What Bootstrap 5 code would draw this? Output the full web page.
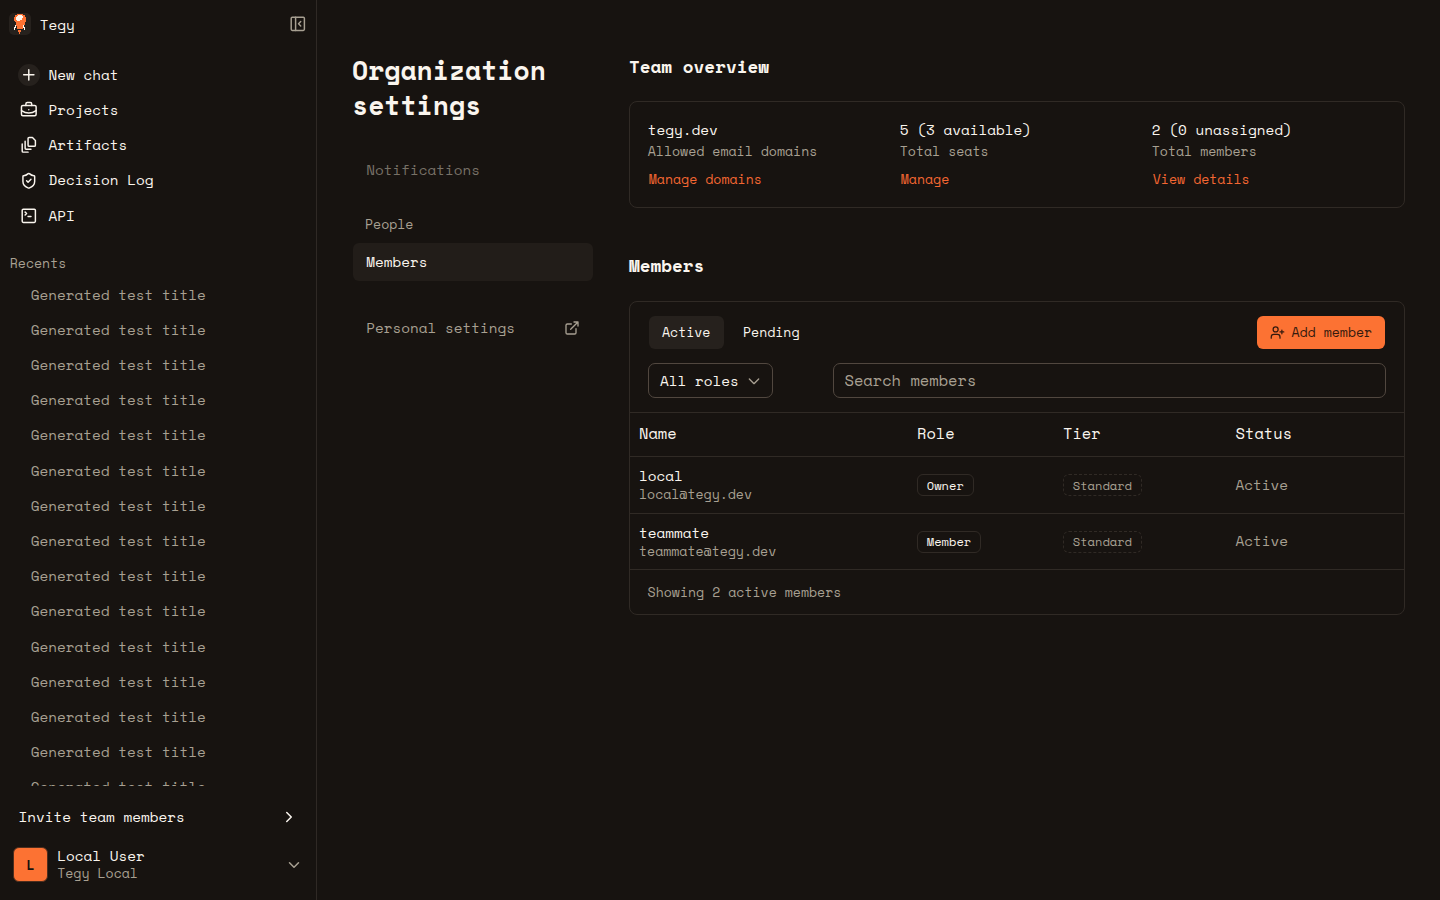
<!DOCTYPE html>
<html lang="en" data-bs-theme="dark">
<head>
<meta charset="utf-8">
<meta name="viewport" content="width=device-width, initial-scale=1">
<title>Organization settings</title>
<link href="https://cdn.jsdelivr.net/npm/bootstrap@5.3.0/dist/css/bootstrap.min.css" rel="stylesheet">
<style>
body{background:#171310;color:#faf5ee;font-family:"Space Mono","Liberation Mono",monospace;font-size:14.3px;line-height:18px;height:100vh;overflow:hidden}
svg{fill:none;stroke:currentColor;stroke-width:2;stroke-linecap:round;stroke-linejoin:round;flex:none;display:block}
a{color:inherit;text-decoration:none}
.soft{color:#a8a092}
.dimmed{color:#777167}
.fs-s{font-size:13.2px}
.side{width:317px;border-right:1px solid #2f2925}
.brand-row{height:48px;padding:0 9px}
.brand-row .label{padding:2px 0 0 .8px}
.brand-mark{width:22px;height:22px;border-radius:5px;background:#26211d}
.brand-mark svg{stroke:none}
.menu{padding:9.2px 0 0 17.6px}
.menu a{height:35.2px;gap:8.8px}
.menu .ico{width:22px;height:22px}
.round{background:#26211d;border-radius:50%}
.recents-label{padding:21px 0 0 9.8px;height:44px}
.recents{height:509px;overflow:hidden}
.recents a{height:35.2px;padding-left:30.8px}
.invite{height:62px;padding:0 18px 0 18.4px}
.account{padding:0 13.4px 0 13px;height:33px}
.account .who{padding-left:9.2px}
.account .fs-s{line-height:17px;margin-bottom:1px}
.avatar{width:35px;height:35px;border-radius:6px;background:#fc7233;border:1px solid #4d2d1d;color:#171310;font-size:13.2px;font-weight:700}
.workspace{padding:53px 35px 0 36px;gap:36px;min-width:0}
.content{min-width:0}
.settings{width:240px}
h1{font-size:26.4px;line-height:35.2px;font-weight:700;margin:0 0 28px -1px;color:#faf5ee}
h2{font-size:17.6px;line-height:26px;font-weight:700;margin:0;color:#faf5ee}
.settings-link{height:38px;padding:0 13.2px;border-radius:6px}
.group-name{height:33px;margin:18px 0 3px;padding-left:12px}
.apart{margin-top:28px}
.picked{background:#221d19}
.panel{border:1px solid #302a25;border-radius:8px}
.stats{height:107px;padding:19px 0 0 17.8px;margin:22px 0 44px}
.stat{width:252px}
.stat .caption-line{margin-top:3px}
.orange{color:#f46732;margin-top:10px;padding-left:1px}
.people{margin-top:23px}
.tabs-row{padding:14px 19px}
.filter-row{padding:0 18px 14px}
.tab-item{height:33px;padding:0 13px 1px;border-radius:6px}
.tab-item.on{background:#26211d;width:75px}
.tab-item.off{margin-left:6px}
.add,.add:hover{height:33px;width:128px;background:#fc7233;color:#351a0e;border-radius:6px;gap:6.6px}
.field{height:35px;border:1px solid #51473f;border-radius:7px;background:transparent}
.role-filter{width:125px;padding:0 10px 0 11px}
.search{width:553px;padding:0 10.5px 1px;font-size:15.4px;color:#faf5ee}
.search::placeholder{color:#a8a092;opacity:1}
.search:focus{outline:1px solid #fd7233}
.people-table{table-layout:fixed;width:100%;border-collapse:separate;border-spacing:0}
.people-table th,.people-table td{border-top:1px solid #302a25;padding:0 0 0 9px;vertical-align:middle}
.people-table th{font-size:15.4px;font-weight:400;height:44px;padding-bottom:2px}
.people-table th:last-child,.people-table td:last-child{padding-left:9.6px}
.people-table tr:last-child td:last-child{padding-bottom:1px}
.tag{display:flex;width:max-content;align-items:center;height:22px;border:1px solid #302a25;border-radius:6px;padding:0 8.8px;font-size:12.1px}
.people-table tbody tr:last-child .tag{padding-bottom:1px}
.tag.dash{border-style:dashed}
.total{height:45px;border-top:1px solid #302a25;padding-left:17.6px}
</style>
</head>
<body class="d-flex">
<aside class="side d-flex flex-column flex-shrink-0">
  <div class="brand-row d-flex align-items-center justify-content-between">
    <div class="d-flex align-items-center gap-2">
      <span class="brand-mark"><svg width="22" height="22" viewBox="0 0 22 22"><path fill="#fd7233" d="M8 1h6v1h2v2h1v5h-1v3h-1v1h-1v3H8v-3H7V9H6V8H5V4h1V2h2zM9 17h3v2h-1v2h-1v-2H9z"/><path fill="#fff5eb" d="M9 2h4v1h1v2h-1v2h-2v1H8V7H7V4h1V3h1zM6 12h1v3H6v2H5v-3h1zM14 12h1v2h1v3h-1v-2h-1z"/></svg></span>
      <span class="label">Tegy</span>
    </div>
    <svg class="soft" width="17.6" height="17.6" viewBox="0 0 24 24"><rect x="3" y="3" width="18" height="18" rx="1.500"/><path d="M9 3v18M16 9l-3 3 3 3"/></svg>
  </div>
  <nav class="menu d-flex flex-column">
    <a href="#" class="d-flex align-items-center"><span class="ico round d-flex align-items-center justify-content-center"><svg width="17.6" height="17.6" viewBox="0 0 24 24"><path d="M12 5v14M5 12h14"/></svg></span>New chat</a>
    <a href="#" class="d-flex align-items-center"><span class="ico d-flex align-items-center justify-content-center"><svg width="17.6" height="17.6" viewBox="0 0 24 24"><rect x="2" y="6" width="20" height="14" rx="2"/><path d="M16 6V4a2 2 0 0 0-2-2h-4a2 2 0 0 0-2 2v2M22 13a18.150 18.150 0 0 1-20 0M12 12h.01"/></svg></span>Projects</a>
    <a href="#" class="d-flex align-items-center"><span class="ico d-flex align-items-center justify-content-center"><svg width="17.6" height="17.6" viewBox="0 0 24 24"><path d="M21 6v6.500c0 .8-.7 1.500-1.500 1.500h-7c-.8 0-1.500-.7-1.500-1.500v-9c0-.8.7-1.500 1.500-1.500H17zM7 7v9.800c0 .7.500 1.200 1.200 1.200H15M3 11v9.800c0 .7.500 1.200 1.200 1.200H11"/></svg></span>Artifacts</a>
    <a href="#" class="d-flex align-items-center"><span class="ico d-flex align-items-center justify-content-center"><svg width="17.6" height="17.6" viewBox="0 0 24 24"><path d="M20 13c0 5-3.500 7.500-7.660 8.950a1 1 0 0 1-.670-.010C7.500 20.500 4 18 4 13V6a1 1 0 0 1 1-1c2 0 4.500-1.200 6.240-2.720a1.170 1.170 0 0 1 1.520 0C14.510 3.810 17 5 19 5a1 1 0 0 1 1 1zM9 12l2 2 4-4"/></svg></span>Decision Log</a>
    <a href="#" class="d-flex align-items-center"><span class="ico d-flex align-items-center justify-content-center"><svg width="17.6" height="17.6" viewBox="0 0 24 24"><rect x="3" y="3" width="18" height="18" rx="1.500"/><path d="m7 7 2 2-2 2M11 13h4"/></svg></span>API</a>
  </nav>
  <div class="recents-label fs-s soft">Recents</div>
  <div class="recents soft" id="recents"></div>
  <a href="#" class="invite d-flex align-items-center justify-content-between">Invite team members<svg width="18" height="18" viewBox="0 0 24 24"><path d="m9 18 6-6-6-6"/></svg></a>
  <div class="account d-flex align-items-center">
    <span class="avatar d-flex align-items-center justify-content-center flex-shrink-0">L</span>
    <div class="who flex-grow-1"><div>Local User</div><div class="fs-s soft">Tegy Local</div></div>
    <svg class="soft" width="18" height="18" viewBox="0 0 24 24"><path d="m6 9 6 6 6-6"/></svg>
  </div>
</aside>
<main class="workspace d-flex flex-grow-1 align-items-start">
  <nav class="settings flex-shrink-0">
    <h1>Organization settings</h1>
    <a href="#" class="settings-link dimmed d-flex align-items-center">Notifications</a>
    <div class="group-name fs-s soft d-flex align-items-center">People</div>
    <a href="#" class="settings-link picked d-flex align-items-center">Members</a>
    <a href="#" class="settings-link apart soft d-flex align-items-center justify-content-between"><span>Personal settings</span><svg width="16" height="16" viewBox="0 0 24 24"><path d="M15 3h6v6M10 14 21 3M18 13v6a2 2 0 0 1-2 2H5a2 2 0 0 1-2-2V8a2 2 0 0 1 2-2h6"/></svg></a>
  </nav>
  <div class="content flex-grow-1">
    <h2>Team overview</h2>
    <section class="panel stats d-flex">
      <div class="stat"><div>tegy.dev</div><div class="caption-line fs-s soft">Allowed email domains</div><a href="#" class="fs-s orange d-block">Manage domains</a></div>
      <div class="stat"><div>5 (3 available)</div><div class="caption-line fs-s soft">Total seats</div><a href="#" class="fs-s orange d-block">Manage</a></div>
      <div class="stat"><div>2 (0 unassigned)</div><div class="caption-line fs-s soft">Total members</div><a href="#" class="fs-s orange d-block">View details</a></div>
    </section>
    <h2>Members</h2>
    <section class="panel people">
      <div class="tabs-row d-flex justify-content-between">
        <div class="d-flex fs-s">
          <a href="#" class="tab-item on d-flex align-items-center">Active</a>
          <a href="#" class="tab-item off d-flex align-items-center">Pending</a>
        </div>
        <button class="add btn border-0 p-0 fs-s d-flex align-items-center justify-content-center"><svg width="15" height="15" viewBox="0 0 24 24"><path d="M2 21v-2a4 4 0 0 1 4-4h6a4 4 0 0 1 4 4v2M19 8v6M16 11h6"/><circle cx="9" cy="7" r="4"/></svg>Add member</button>
      </div>
      <div class="filter-row d-flex justify-content-between">
        <button class="field role-filter d-flex align-items-center justify-content-between text-reset">All roles<svg class="soft" width="16" height="16" viewBox="0 0 24 24"><path d="m5 9 7 7 7-7"/></svg></button>
        <input class="field search" type="text" placeholder="Search members">
      </div>
      <table class="people-table">
        <colgroup><col style="width:278px"><col style="width:146px"><col style="width:172px"><col></colgroup>
        <thead><tr><th>Name</th><th>Role</th><th>Tier</th><th>Status</th></tr></thead>
        <tbody>
          <tr style="height:57px"><td><div>local</div><div class="fs-s soft">local@tegy.dev</div></td><td><span class="tag">Owner</span></td><td><span class="tag dash soft">Standard</span></td><td class="soft">Active</td></tr>
          <tr style="height:56px"><td><div>teammate</div><div class="fs-s soft">teammate@tegy.dev</div></td><td><span class="tag">Member</span></td><td><span class="tag dash soft">Standard</span></td><td class="soft">Active</td></tr>
        </tbody>
      </table>
      <div class="total fs-s soft d-flex align-items-center">Showing 2 active members</div>
    </section>
  </div>
</main>
<script src="https://cdn.jsdelivr.net/npm/bootstrap@5.3.0/dist/js/bootstrap.bundle.min.js"></script>
<script>
document.getElementById('recents').innerHTML = Array.from({length: 15}, () => '<a href="#" class="d-flex align-items-center">Generated test title</a>').join('');
</script>
</body>
</html>
